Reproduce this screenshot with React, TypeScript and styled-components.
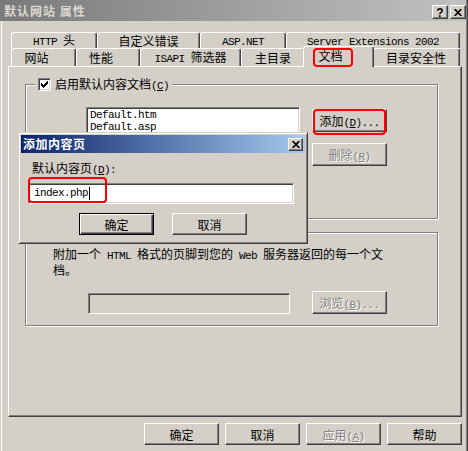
import React from 'react';
import styled, { createGlobalStyle, css } from 'styled-components';

const FACE = '#D4D0C8';
const CJK = '"Noto Sans CJK SC", "Noto Sans", sans-serif';
const MONO = '"Liberation Mono", "DejaVu Sans Mono", monospace';

const GlobalStyle = createGlobalStyle`
  html, body { margin: 0; padding: 0; background: ${FACE}; }
  body { font-family: ${CJK}; font-size: 12px; color: #000; line-height: 1; }
  * { box-sizing: border-box; }
`;

const Window = styled.div`
  position: relative;
  width: 468px;
  height: 451px;
  overflow: hidden;
  background: ${FACE};
  box-shadow: inset 1px 0 0 ${FACE}, inset 2px 0 0 #fff, inset -1px 0 0 #404040, inset -2px 0 0 #808080;
  display: flex;
  flex-direction: column;
`;

const TitleBar = styled.div`
  height: 21px;
  margin-right: 2px;
  display: flex;
  align-items: flex-end;
  padding: 0 0 2px 4px;
  background: linear-gradient(to right, #7a7a7a, #c2c2c2);
`;

const TitleText = styled.div`
  flex: 1;
  align-self: center;
  padding-top: 3px;
  color: #dcd8d0;
  font-weight: 700;
  font-size: 12px;
  letter-spacing: 1px;
`;

const CaptionButtons = styled.div`
  display: flex;
  gap: 2px;
`;

const CapBtn = styled.div<{ $w: number; $h: number }>`
  width: ${p => p.$w}px;
  height: ${p => p.$h}px;
  background: ${FACE};
  border: 1px solid;
  border-color: #fff #404040 #404040 #fff;
  box-shadow: inset -1px -1px 0 #808080;
  display: flex;
  align-items: center;
  justify-content: center;
`;

const HelpGlyph = styled.span`
  font-family: "Liberation Sans", sans-serif;
  font-weight: 700;
  font-size: 12px;
  line-height: 1;
  margin-top: 1px;
`;

const Content = styled.div`
  padding: 11px 0 0 8px;
  display: flex;
  flex-direction: column;
`;

const TabRow = styled.div<{ $h: number }>`
  display: flex;
  align-items: flex-end;
  height: ${p => p.$h}px;
  width: 449px;
  margin-left: 3px;
`;

const Tab = styled.div<{ $w: number; $active?: boolean; $shift?: number }>`
  width: ${p => p.$w}px;
  height: 100%;
  flex: none;
  background: ${FACE};
  border-top: 1px solid #fff;
  border-left: 1px solid #fff;
  border-right: 1px solid #404040;
  border-radius: 3px 3px 0 0;
  box-shadow: inset -1px 0 0 #808080;
  display: flex;
  align-items: center;
  justify-content: center;
  padding-top: 1px;
  padding-right: ${p => (p.$shift ? p.$shift * 2 : 0)}px;
  white-space: pre;
  ${p =>
    p.$active &&
    css`
      width: ${p.$w + 4}px;
      height: calc(100% + 3px);
      margin: 0 -2px -1px;
      position: relative;
      z-index: 2;
      padding-top: 0;
      padding-bottom: 3px;
    `}
`;

const TabLabel = styled.span`
  white-space: pre;
`;

const L = styled.span`
  font-family: ${MONO};
  font-size: 11px;
  letter-spacing: -0.6px;
`;

const U = styled.span`
  text-decoration: underline;
  text-underline-offset: 1px;
`;

const Panel = styled.div`
  position: relative;
  z-index: 1;
  width: 454px;
  height: 351px;
  border: 1px solid;
  border-color: #fff #404040 #404040 #fff;
  box-shadow: inset -1px -1px 0 #808080;
  padding: 17px 0 0 16px;
  display: flex;
  flex-direction: column;
`;

const Group = styled.div<{ $h: number; $mt?: number }>`
  position: relative;
  width: 413px;
  height: ${p => p.$h}px;
  margin-top: ${p => p.$mt ?? 0}px;
  border: 1px solid #808080;
  box-shadow: inset 1px 1px 0 #fff, 1px 1px 0 #fff;
`;

const Legend = styled.div`
  position: absolute;
  left: 9px;
  top: -8px;
  height: 15px;
  display: flex;
  align-items: center;
  gap: 4px;
  padding: 0 3px;
  background: ${FACE};
  white-space: nowrap;
`;

const CheckBoxBox = styled.div`
  width: 13px;
  height: 13px;
  background: #fff;
  border: 1px solid;
  border-color: #808080 #fff #fff #808080;
  box-shadow: inset 1px 1px 0 #404040, inset -1px -1px 0 ${FACE};
  position: relative;
  svg { position: absolute; left: -1px; top: -1px; }
`;

const CheckBox = () => (
  <CheckBoxBox>
    <svg width="13" height="13" viewBox="0 0 13 13" shapeRendering="crispEdges">
      {[
        [3, 5],
        [4, 6],
        [5, 7],
        [6, 6],
        [7, 5],
        [8, 4],
        [9, 3],
      ].map(([x, y]) => (
        <rect key={x} x={x} y={y} width={1} height={3} fill="#000" />
      ))}
    </svg>
  </CheckBoxBox>
);

const GroupRow = styled.div`
  display: flex;
  padding: 22px 0 0 60px;
`;

const ListBox = styled.div`
  width: 214px;
  height: 98px;
  background: #fff;
  border: 1px solid;
  border-color: #808080 #fff #fff #808080;
  box-shadow: inset 1px 1px 0 #404040, inset -1px -1px 0 ${FACE};
  padding: 1px 1px;
`;

const ListItem = styled.div`
  font-family: ${MONO};
  font-size: 11px;
  letter-spacing: -0.6px;
  line-height: 12px;
  padding-left: 2px;
`;

const SideButtons = styled.div`
  display: flex;
  flex-direction: column;
  gap: 11px;
  margin-left: 12px;
  padding-top: 2px;
`;

const Button = styled.button<{ $default?: boolean; $h?: number }>`
  width: 75px;
  height: ${p => p.$h ?? 23}px;
  margin: 0;
  padding: 0;
  background: ${FACE};
  font-family: ${CJK};
  font-size: 12px;
  color: #000;
  border: 1px solid;
  border-color: #fff #404040 #404040 #fff;
  box-shadow: inset -1px -1px 0 #808080;
  display: flex;
  align-items: center;
  justify-content: center;
  white-space: nowrap;
  ${p =>
    p.$default &&
    css`
      border-color: #000;
      box-shadow: inset 1px 1px 0 #fff, inset -1px -1px 0 #404040, inset -2px -2px 0 #808080;
    `}
  &:disabled {
    color: #808080;
    text-shadow: 1px 1px 0 #fff;
  }
`;

const GroupText = styled.div`
  padding: 14px 0 0 27px;
  line-height: 13px;
`;

const FooterRow = styled.div`
  display: flex;
  align-items: flex-end;
  gap: 22px;
  margin: 15px 0 0 62px;
`;

const SunkenField = styled.div<{ $w: number; $h: number; $white?: boolean }>`
  width: ${p => p.$w}px;
  height: ${p => p.$h}px;
  background: ${p => (p.$white ? '#fff' : FACE)};
  border: 1px solid;
  border-color: #808080 #fff #fff #808080;
  box-shadow: inset 1px 1px 0 #404040, inset -1px -1px 0 ${FACE};
  display: flex;
  align-items: center;
  padding-left: 5px;
`;

const Caret = styled.span`
  display: inline-block;
  width: 1px;
  height: 13px;
  background: #000;
  margin-left: 1px;
`;

const ButtonBar = styled.div`
  width: 454px;
  display: flex;
  justify-content: flex-end;
  gap: 6px;
  margin-top: 6px;
`;

const Dialog = styled.div`
  position: absolute;
  left: 18px;
  top: 132px;
  width: 290px;
  height: 112px;
  z-index: 10;
  background: ${FACE};
  border: 1px solid;
  border-color: ${FACE} #404040 #404040 ${FACE};
  box-shadow: inset 1px 1px 0 #fff, inset -1px -1px 0 #808080;
  padding: 2px;
  display: flex;
  flex-direction: column;
`;

const DialogTitle = styled.div`
  height: 18px;
  display: flex;
  align-items: center;
  padding: 0 2px;
  background: linear-gradient(to right, #0a246a, #a6caf0);
`;

const DialogTitleText = styled.div`
  flex: 1;
  color: #fff;
  font-weight: 700;
  letter-spacing: 0.5px;
`;

const DialogBody = styled.div`
  display: flex;
  flex-direction: column;
  padding: 8px 0 0 7px;
`;

const FieldLabel = styled.div`
  line-height: 13px;
  padding-left: 4px;
`;

const FieldWrap = styled.div`
  margin-top: 6px;
`;

const DialogButtons = styled.div`
  display: flex;
  justify-content: center;
  gap: 18px;
  margin-top: 9px;
  padding-right: 7px;
`;

const Highlight = styled.div<{ $x: number; $y: number; $w: number; $h: number }>`
  position: absolute;
  left: ${p => p.$x}px;
  top: ${p => p.$y}px;
  width: ${p => p.$w}px;
  height: ${p => p.$h}px;
  border: 2px solid #f00;
  border-radius: 4px;
  z-index: 20;
  pointer-events: none;
`;

const CloseIcon = () => (
  <svg width="8" height="7" viewBox="0 0 8 7">
    <path d="M0.6 0 L7.4 7 M7.4 0 L0.6 7" stroke="#000" strokeWidth="1.7" fill="none" />
  </svg>
);

type TabDef = { label: React.ReactNode; w: number; active?: boolean; shift?: number };

const row1: TabDef[] = [
  { label: <><L>HTTP </L>头</>, w: 86 },
  { label: '自定义错误', w: 103 },
  { label: <L>ASP.NET</L>, w: 86 },
  { label: <L>Server Extensions 2002</L>, w: 174 },
];

const row2: TabDef[] = [
  { label: '网站', w: 65, shift: 7 },
  { label: '性能', w: 64, shift: 7 },
  { label: <><L>ISAPI </L>筛选器</>, w: 101 },
  { label: '主目录', w: 64 },
  { label: '文档', w: 67, active: true, shift: 8 },
  { label: '目录安全性', w: 88 },
];

export default function App() {
  return (
    <>
      <GlobalStyle />
      <Window>
        <TitleBar>
          <TitleText>默认网站 属性</TitleText>
          <CaptionButtons>
            <CapBtn $w={16} $h={14}>
              <HelpGlyph>?</HelpGlyph>
            </CapBtn>
            <CapBtn $w={16} $h={14}>
              <CloseIcon />
            </CapBtn>
          </CaptionButtons>
        </TitleBar>
        <Content>
          <TabRow $h={16}>
            {row1.map((t, i) => (
              <Tab key={i} $w={t.w}>
                <TabLabel>{t.label}</TabLabel>
              </Tab>
            ))}
          </TabRow>
          <TabRow $h={18}>
            {row2.map((t, i) => (
              <Tab key={i} $w={t.w} $active={t.active} $shift={t.shift}>
                <TabLabel>{t.label}</TabLabel>
              </Tab>
            ))}
          </TabRow>
          <Panel>
            <Group $h={135}>
              <Legend>
                <CheckBox />
                <span>
                  启用默认内容文档<L>(<U>C</U>)</L>
                </span>
              </Legend>
              <GroupRow>
                <ListBox>
                  <ListItem>Default.htm</ListItem>
                  <ListItem>Default.asp</ListItem>
                </ListBox>
                <SideButtons>
                  <Button>
                    <span>
                      添加<L>(<U>D</U>)...</L>
                    </span>
                  </Button>
                  <Button disabled>
                    <span>
                      删除<L>(<U>R</U>)</L>
                    </span>
                  </Button>
                </SideButtons>
              </GroupRow>
            </Group>
            <Group $h={94} $mt={13}>
              <GroupText>
                附加一个<L> HTML </L>格式的页脚到您的<L> Web </L>服务器返回的每一个文
                <br />
                档。
              </GroupText>
              <FooterRow>
                <SunkenField $w={202} $h={21} />
                <Button disabled>
                  <span>
                    浏览<L>(<U>B</U>)...</L>
                  </span>
                </Button>
              </FooterRow>
            </Group>
          </Panel>
          <ButtonBar>
            <Button $h={22}>确定</Button>
            <Button $h={22}>取消</Button>
            <Button $h={22} disabled>
              <span>
                应用<L>(<U>A</U>)</L>
              </span>
            </Button>
            <Button $h={22}>帮助</Button>
          </ButtonBar>
        </Content>

        <Dialog>
          <DialogTitle>
            <DialogTitleText>添加内容页</DialogTitleText>
            <CapBtn $w={15} $h={13}>
              <CloseIcon />
            </CapBtn>
          </DialogTitle>
          <DialogBody>
            <FieldLabel>
              默认内容页<L>(<U>D</U>):</L>
            </FieldLabel>
            <FieldWrap>
              <SunkenField $w={266} $h={21} $white>
                <L>index.php</L>
                <Caret />
              </SunkenField>
            </FieldWrap>
            <DialogButtons>
              <Button $default $h={22}>
                确定
              </Button>
              <Button $h={22}>取消</Button>
            </DialogButtons>
          </DialogBody>
        </Dialog>

        <Highlight $x={313} $y={48} $w={40} $h={19} />
        <Highlight $x={313} $y={109} $w={73} $h={26} />
        <Highlight $x={28} $y={177} $w={79} $h={26} />
      </Window>
    </>
  );
}
